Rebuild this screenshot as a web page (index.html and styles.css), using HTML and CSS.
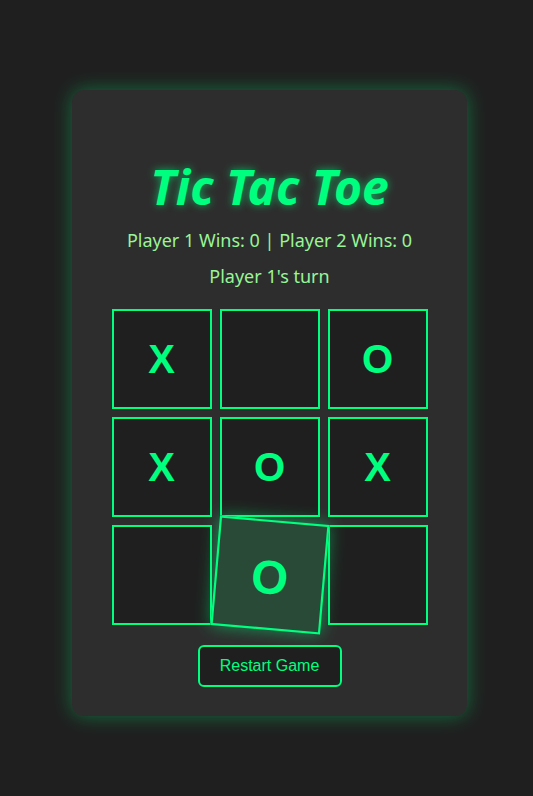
FILE: index.html
```html
<!DOCTYPE html>
<html lang="en">
<head>
    <meta charset="UTF-8">
    <meta name="viewport" content="width=device-width, initial-scale=1.0">
    <title>Tic Tac Toe</title>
    <link rel="stylesheet" href="styles.css">
</head>
<body>
    <div class="game-container">
        <h1 class="title">Tic Tac Toe</h1>
        <p class="score">Player 1 Wins: 0 | Player 2 Wins: 0</p>
        <p class="status">Player 1's turn</p>

        <div class="board">
            <div class="cell">X</div>
            <div class="cell"></div>
            <div class="cell">O</div>
            <div class="cell">X</div>
            <div class="cell">O</div>
            <div class="cell">X</div>
            <div class="cell"></div>
            <div class="cell hovered">O</div>
            <div class="cell"></div>
        </div>

        <button class="restart-btn">Restart Game</button>
    </div>
</body>
</html>
```

FILE: styles.css
```css
:root {
    --bg-color: #1f1f1f;
    --card-bg: #2d2d2d;
    --neon: #00ff7f;
    --soft-green: #98f598;
}

* {
    margin: 0;
    padding: 0;
    box-sizing: border-box;
}

body {
    background: var(--bg-color);
    font-family: 'Noto Sans', 'Open Sans', sans-serif;
    display: flex;
    justify-content: center;
    padding: 90px 0 0 6px;
    min-height: 796px;
}

.game-container {
    width: 395px;
    height: 626px;
    background: var(--card-bg);
    border-radius: 12px;
    box-shadow: 0 0 20px rgba(0, 255, 127, 0.35);
    display: flex;
    flex-direction: column;
    align-items: center;
    padding-top: 66px;
}

.title {
    font-size: 48px;
    font-style: italic;
    font-weight: 700;
    color: var(--neon);
    text-shadow: 0 0 8px rgba(0, 255, 127, 0.6);
    line-height: 62px;
}

.score,
.status {
    color: var(--soft-green);
    font-size: 18px;
    line-height: 24px;
}

.score {
    margin-top: 10px;
}

.status {
    margin-top: 12px;
}

.board {
    display: grid;
    grid-template-columns: repeat(3, 100px);
    grid-template-rows: repeat(3, 100px);
    gap: 8px;
    margin-top: 21px;
}

.cell {
    background: #1f1f1f;
    border: 2px solid var(--neon);
    display: flex;
    align-items: center;
    justify-content: center;
    font-family: 'Liberation Sans', Arial, sans-serif;
    font-weight: 700;
    font-size: 40px;
    color: var(--neon);
}

.cell.hovered {
    background: #284a37;
    font-size: 43px;
    padding-top: 4px;
    transform: rotate(5deg) scale(1.1);
    box-shadow: 0 0 15px rgba(0, 255, 127, 0.5);
}

.restart-btn {
    margin-top: 20px;
    width: 144px;
    height: 42px;
    background: #1f1f1f;
    border: 2px solid var(--neon);
    border-radius: 6px;
    color: var(--neon);
    font-family: 'Liberation Sans', Arial, sans-serif;
    font-size: 16px;
}
```
